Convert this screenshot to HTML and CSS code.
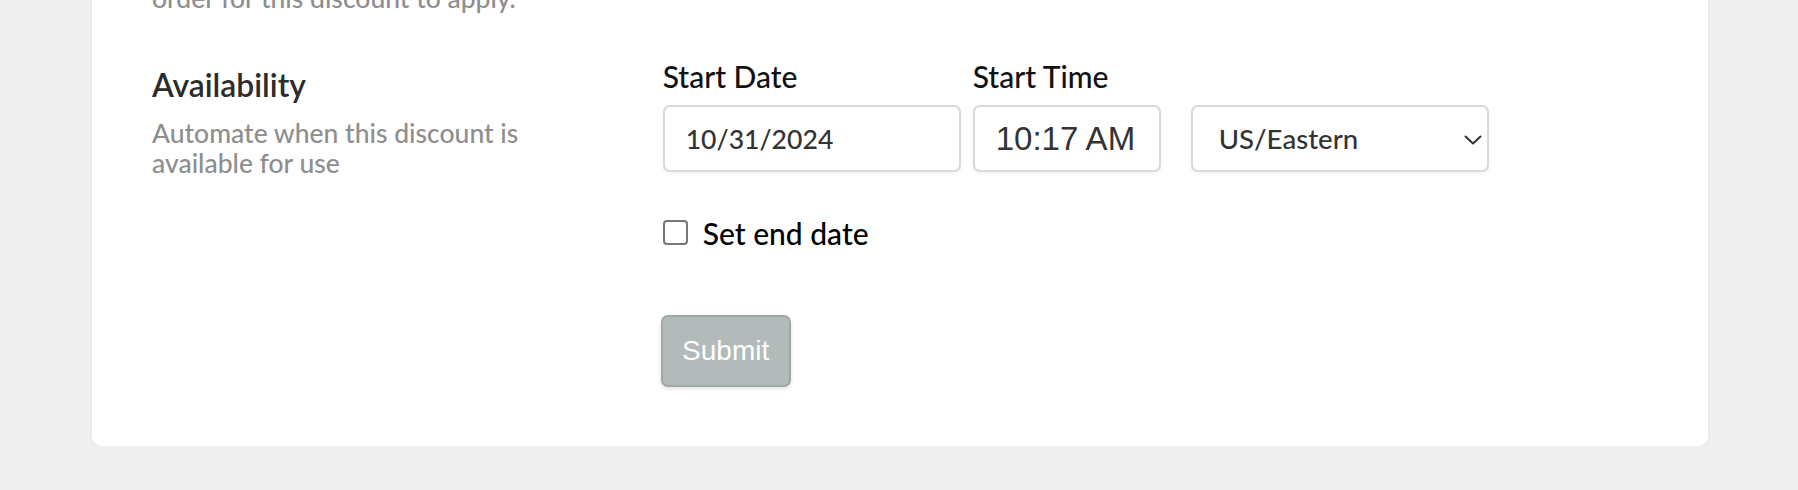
FILE: index.html
```html
<!DOCTYPE html>
<html lang="en">
<head>
<meta charset="utf-8">
<title>Discount availability</title>
<link rel="stylesheet" href="styles.css">
</head>
<body>
<div class="page">
  <form class="card">
    <div class="row row-prev">
      <div class="info">
        <p class="desc">Requirements must be met in the<br>order for this discount to apply.</p>
      </div>
      <div class="controls"></div>
    </div>
    <div class="row">
      <div class="info">
        <h2 class="heading">Availability</h2>
        <p class="desc desc-wrap">Automate when this discount is available for use</p>
      </div>
      <div class="controls">
        <div class="fields">
          <div class="field field-date">
            <label class="label" for="start-date">Start Date</label>
            <input class="input input-date" id="start-date" type="text" value="10/31/2024">
          </div>
          <div class="field field-time">
            <label class="label" for="start-time">Start Time</label>
            <input class="input input-time" id="start-time" type="text" value="10:17 AM">
          </div>
          <div class="field field-tz">
            <div class="select-wrap">
              <select class="input select" aria-label="Time zone">
                <option>US/Eastern</option>
              </select>
              <svg class="chevron" width="18" height="10" viewBox="0 0 18 10" aria-hidden="true">
                <polyline points="1.5,1.5 9,8.5 16.5,1.5" fill="none" stroke="#333" stroke-width="2" stroke-linecap="round" stroke-linejoin="round"/>
              </svg>
            </div>
          </div>
        </div>
        <label class="check-row">
          <span class="checkbox"></span>
          <span class="check-text">Set end date</span>
        </label>
        <button class="submit" type="button">Submit</button>
      </div>
    </div>
  </form>
</div>
</body>
</html>
```
FILE: styles.css
```css
html, body {
  margin: 0;
  padding: 0;
  background: #efefef;
  overflow: hidden;
}

body {
  font-family: "Lato", "Noto Sans", sans-serif;
  color: #111;
}

.page {
  padding: 0 90px 0 92px;
}

.card {
  margin-top: -76.75px;
  padding: 30px 60px 59px;
  background: #fff;
  border-radius: 0 0 9px 9px;
  box-shadow: 0 1px 3px rgba(0, 0, 0, 0.07);
}

.row {
  display: grid;
  grid-template-columns: 510.7px 1fr;
}

.row + .row {
  margin-top: 45.2px;
}

.info {
  min-width: 0;
}

.row-prev .desc {
  white-space: nowrap;
}

.heading {
  margin: 8.6px 0 0;
  font-size: 31.8px;
  line-height: 37px;
  font-weight: 600;
  color: #2c2c2c;
}

.desc {
  margin: 0;
  font-size: 26.5px;
  line-height: 30px;
  font-weight: 500;
  color: #8e8e8e;
}

.desc-wrap {
  margin-top: 13.7px;
  max-width: 392px;
}

.controls {
  display: flex;
  flex-direction: column;
  align-items: flex-start;
}

.fields {
  display: flex;
  align-items: flex-end;
}

.field {
  display: flex;
  flex-direction: column;
}

.field-time {
  margin-left: 12px;
}

.field-tz {
  margin-left: 30px;
}

.label {
  font-size: 30px;
  line-height: 36px;
  font-weight: 500;
  color: #111;
  margin-bottom: 10.6px;
}

.input {
  box-sizing: border-box;
  height: 67px;
  margin: 0;
  border: 2px solid #d9d9d9;
  border-radius: 7px;
  background: #fff;
  box-shadow: 0 2px 4px rgba(0, 0, 0, 0.06);
  color: #333;
  outline: none;
}

.input-date {
  width: 298px;
  padding: 0 0 0 21px;
  font-family: "Lato", "Noto Sans", sans-serif;
  font-size: 26.6px;
  font-weight: 500;
}

.input-time {
  width: 188px;
  padding: 0 0 0 21px;
  font-family: "Liberation Sans", Arial, sans-serif;
  font-size: 33px;
}

.select-wrap {
  position: relative;
}

.select {
  display: block;
  width: 298.5px;
  padding: 0 0 0 26px;
  appearance: none;
  -webkit-appearance: none;
  font-family: "Lato", "Noto Sans", sans-serif;
  font-size: 27.6px;
  font-weight: 500;
}

.chevron {
  position: absolute;
  right: 7px;
  top: 50%;
  margin-top: -4px;
  pointer-events: none;
}

.check-row {
  display: flex;
  align-items: center;
  margin-top: 43.4px;
  height: 36px;
}

.checkbox {
  box-sizing: border-box;
  width: 25px;
  height: 25px;
  border: 2px solid #777;
  border-radius: 4px;
  background: #fff;
  margin-top: -1px;
}

.check-text {
  margin-left: 15px;
  font-size: 30px;
  line-height: 36px;
  font-weight: 500;
  color: #000;
}

.submit {
  box-sizing: border-box;
  width: 130px;
  height: 72px;
  margin: 63.3px 0 0 -2px;
  padding: 0;
  border: 2px solid #9fa8a6;
  border-radius: 7px;
  background: #b2bbb9;
  box-shadow: 0 2px 4px rgba(0, 0, 0, 0.12);
  color: #fff;
  font-family: "Liberation Sans", Arial, sans-serif;
  font-size: 28px;
  line-height: 1;
}
```
